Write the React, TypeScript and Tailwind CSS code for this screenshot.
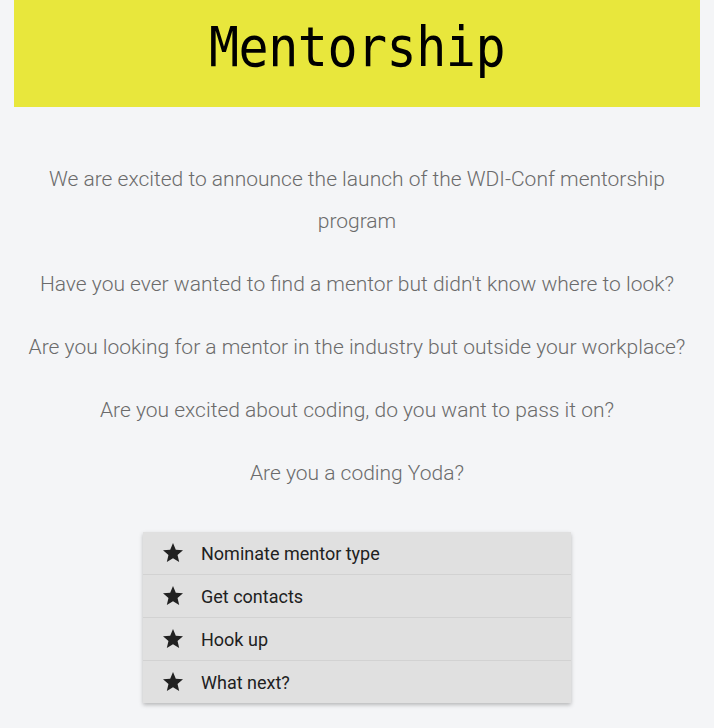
const questions = [
  "Have you ever wanted to find a mentor but didn't know where to look?",
  "Are you looking for a mentor in the industry but outside your workplace?",
  "Are you excited about coding, do you want to pass it on?",
  "Are you a coding Yoda?",
];

const steps = ["Nominate mentor type", "Get contacts", "Hook up", "What next?"];

function StarIcon() {
  return (
    <svg viewBox="0 0 24 24" className="ml-[18px] h-[24px] w-[24px] fill-[#212121]">
      <path d="M12 17.27L18.18 21l-1.64-7.03L22 9.24l-7.19-.61L12 2 9.19 8.63 2 9.24l5.46 4.73L5.82 21z" />
    </svg>
  );
}

export default function App() {
  return (
    <div className="min-h-[728px] bg-[#f4f5f7] px-[14px] font-['Roboto',sans-serif]">
      {/* header */}
      <div className="flex h-[107px] items-start justify-center bg-[#e8e73c] pt-[10px]">
        <h1 className="origin-top scale-y-110 font-['DejaVu_Sans_Mono',monospace] text-[50px] leading-[68px] tracking-[-0.5px] text-black">
          Mentorship
        </h1>
      </div>

      <div className="mx-auto mt-[51px] w-[672px] text-center text-[21px] font-light leading-[42px] text-[#6b6b6b]">
        <p className="px-[6px]">
          We are excited to announce the launch of the WDI-Conf mentorship program
        </p>
        {questions.map((q) => (
          <p key={q} className="mt-[21px]">
            {q}
          </p>
        ))}
      </div>

      {/* steps */}
      <ul className="mx-auto mt-[38px] w-[428px] bg-[#e0e0e0] shadow-[0_2px_4px_rgba(0,0,0,0.25)]">
        {steps.map((s, i) => (
          <li
            key={s}
            className={`flex h-[42px] box-content items-center text-[18px] text-[#212121] ${
              i < steps.length - 1 ? "border-b border-[#d2d2d2]" : ""
            }`}
          >
            <StarIcon />
            <span className="ml-[16px]">{s}</span>
          </li>
        ))}
      </ul>
    </div>
  );
}
